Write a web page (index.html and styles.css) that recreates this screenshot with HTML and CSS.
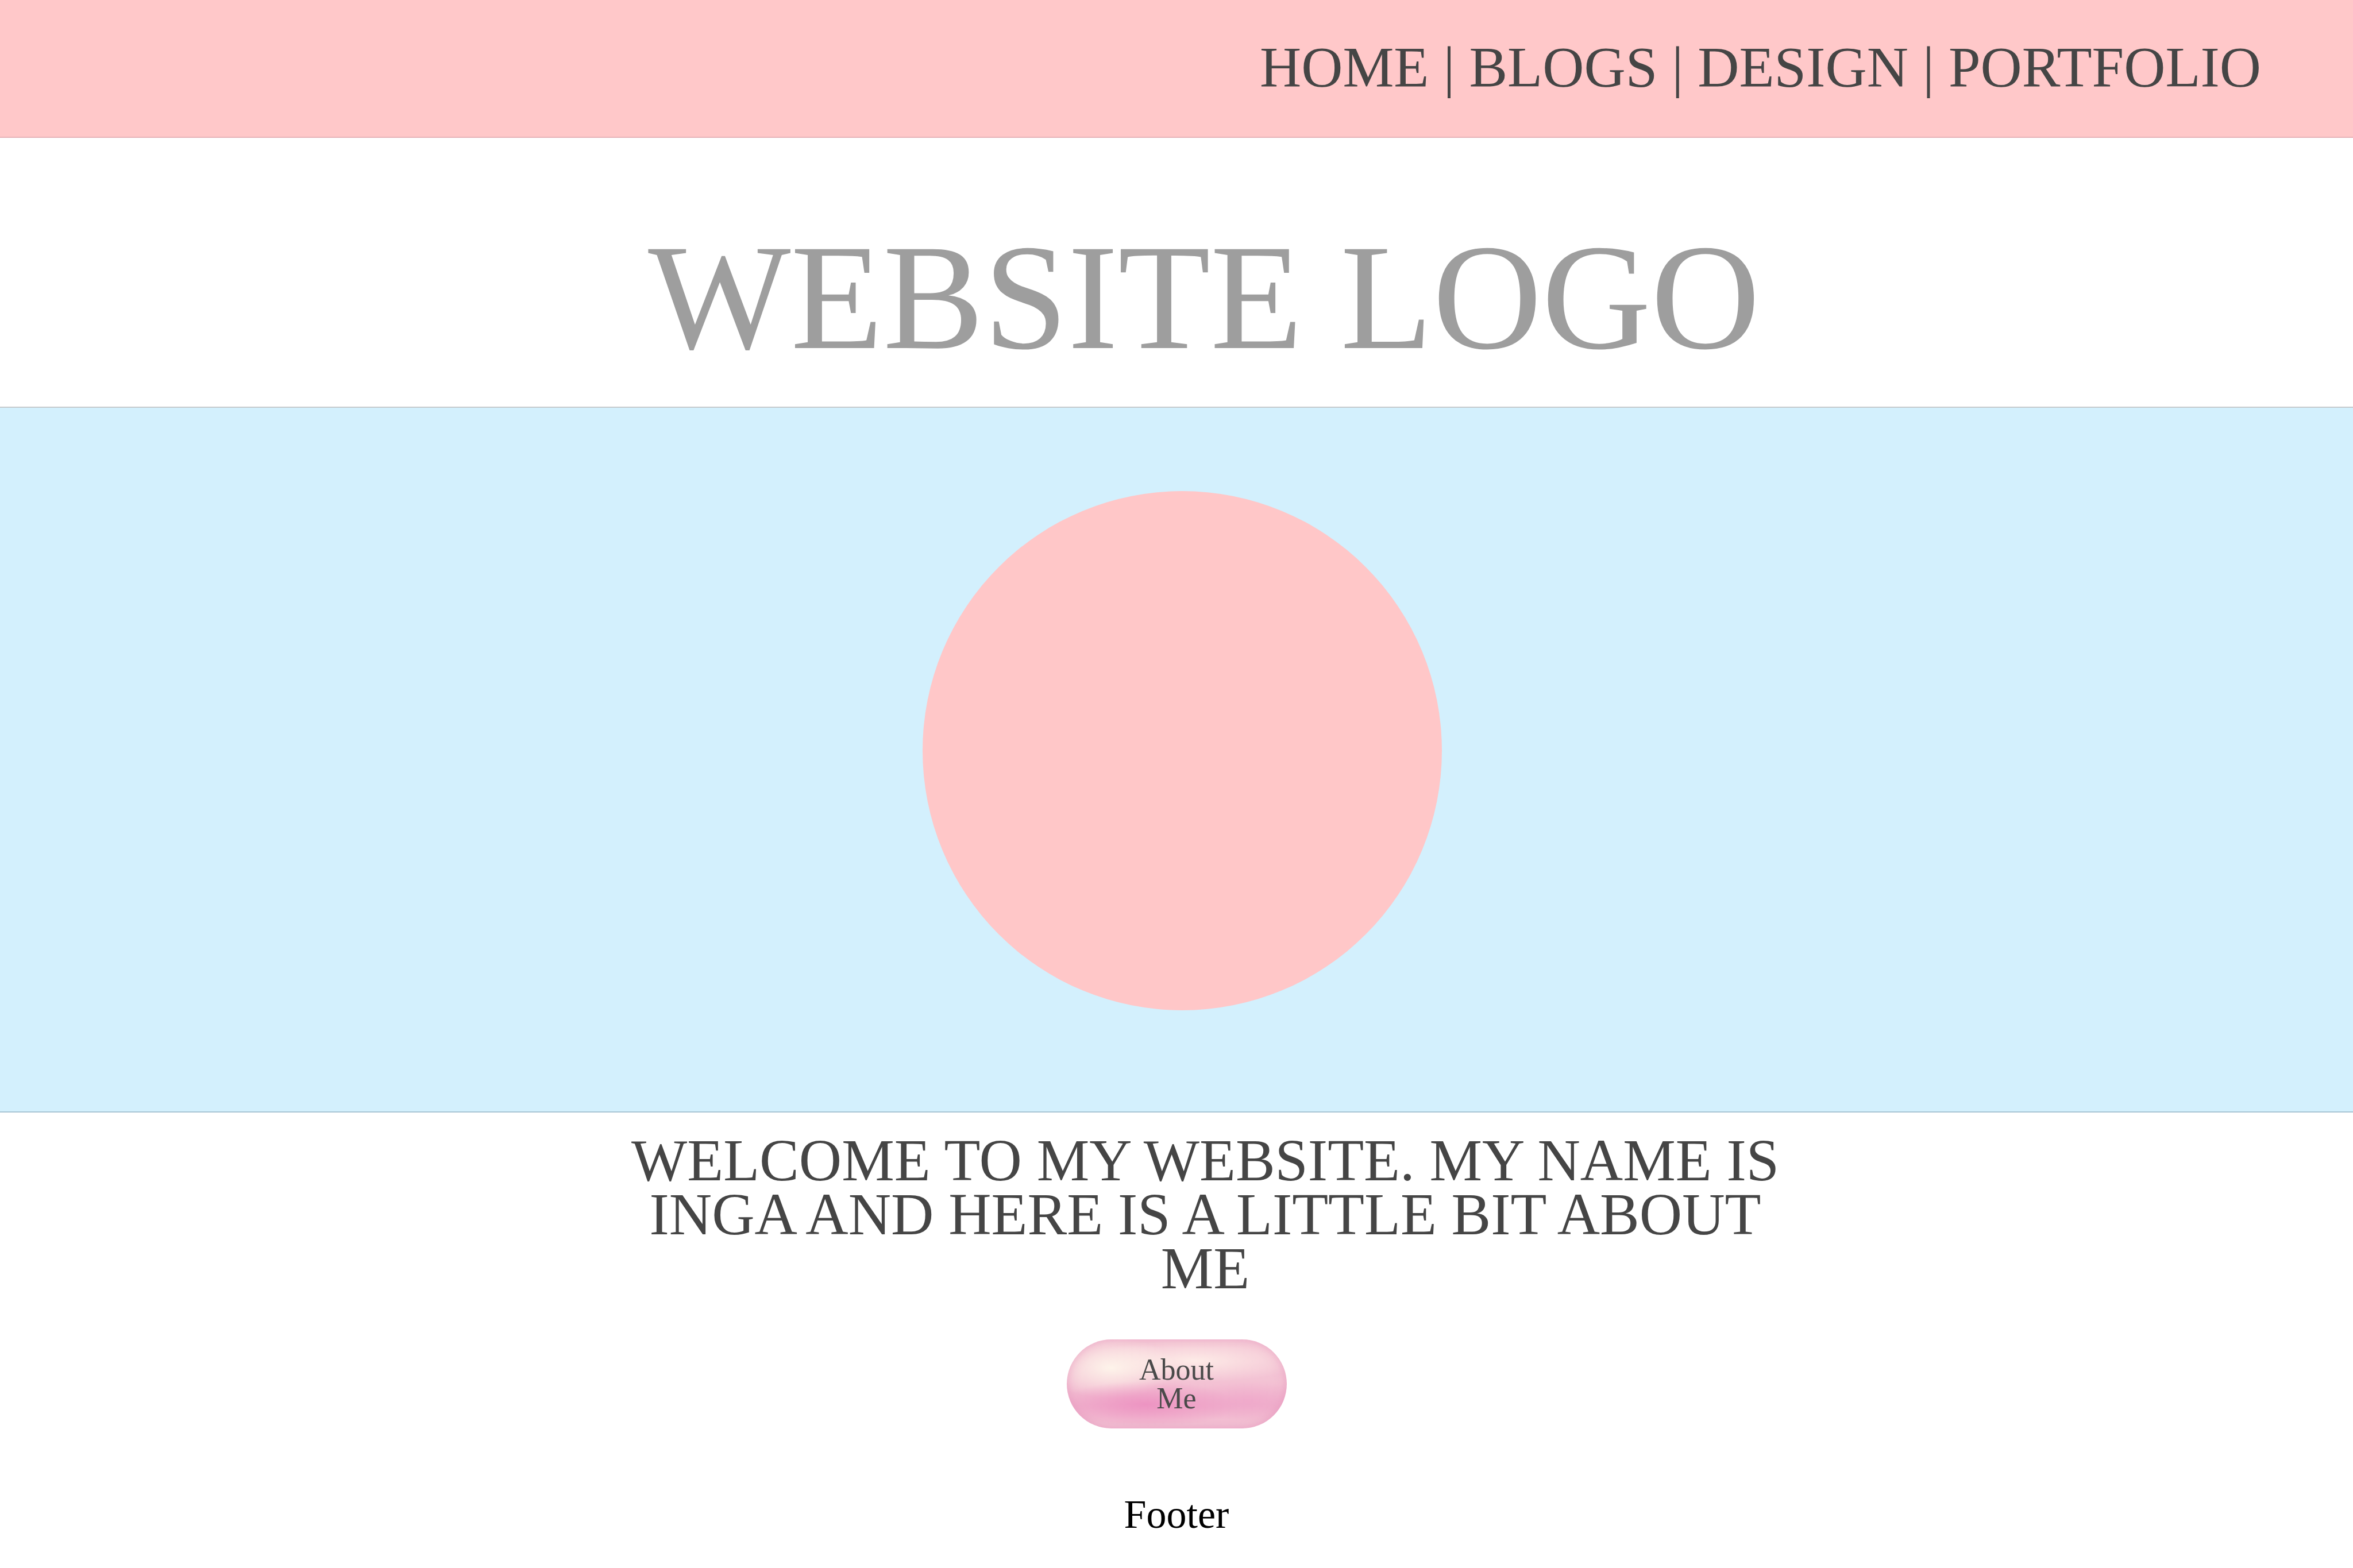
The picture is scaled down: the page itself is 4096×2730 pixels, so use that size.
FILE: index.html
```html
<!DOCTYPE html>
<html lang="en">
<head>
<meta charset="utf-8">
<title>Website</title>
<link rel="stylesheet" href="styles.css">
</head>
<body>
<header class="topbar">
  <nav class="nav">HOME | BLOGS | DESIGN | PORTFOLIO</nav>
</header>
<section class="logo-area">
  <h1 class="logo">WEBSITE LOGO</h1>
</section>
<section class="hero">
  <div class="circle"></div>
</section>
<main class="intro">
  <h2 class="intro-title">WELCOME TO MY WEBSITE. MY NAME IS INGA AND HERE IS A LITTLE BIT ABOUT ME</h2>
  <a class="pill" href="#">About Me</a>
</main>
<footer class="footer">Footer</footer>
</body>
</html>
```
FILE: styles.css
```css
* { box-sizing: border-box; }
html, body { margin: 0; padding: 0; background: #ffffff; }
body { font-family: "Liberation Serif", "Times New Roman", serif; }

.topbar {
  height: 240px;
  background: #ffc8c9;
  border-bottom: 2px solid #e6b2b7;
  display: flex;
  justify-content: flex-end;
  align-items: center;
  padding-right: 160px;
  padding-bottom: 4px;
}
.nav {
  font-size: 100px;
  line-height: 1;
  color: #454545;
  white-space: nowrap;
}

.logo-area {
  height: 470px;
  padding-top: 146px;
  padding-left: 96px;
  border-bottom: 2px solid #c5cacd;
  text-align: center;
}
.logo {
  margin: 0;
  font-weight: normal;
  font-size: 263px;
  line-height: 1;
  color: #9e9e9e;
  white-space: nowrap;
}

.hero {
  height: 1227px;
  background: #d3f0fd;
  border-bottom: 2px solid #a9c6d4;
  display: flex;
  justify-content: center;
  padding-top: 145px;
  padding-left: 20px;
}
.circle {
  width: 904px;
  height: 904px;
  border-radius: 50%;
  background: #ffc7c8;
}

.intro {
  display: flex;
  flex-direction: column;
  align-items: center;
  padding-top: 36px;
}
.intro-title {
  margin: 0 0 0 100px;
  width: 2040px;
  font-weight: normal;
  font-size: 103px;
  line-height: 94px;
  color: #454545;
  text-align: center;
}
.pill {
  margin-top: 77px;
  width: 383px;
  height: 155px;
  border-radius: 78px;
  padding: 0 110px;
  display: flex;
  align-items: center;
  justify-content: center;
  text-align: center;
  text-decoration: none;
  font-size: 52px;
  line-height: 50px;
  color: #4a4a4a;
  background:
    radial-gradient(ellipse 42% 26% at 36% 73%, rgba(236,142,192,0.85), rgba(236,142,192,0) 100%),
    radial-gradient(ellipse 30% 22% at 82% 70%, rgba(238,160,200,0.6), rgba(238,160,200,0) 100%),
    radial-gradient(ellipse 30% 34% at 20% 32%, rgba(255,248,236,0.9), rgba(255,248,236,0) 100%),
    radial-gradient(ellipse 50% 24% at 58% 24%, rgba(255,242,234,0.85), rgba(255,242,234,0) 100%),
    linear-gradient(180deg, #f4c6d5 0%, #f3c3d4 45%, #f0b4cd 75%, #f3c4d5 100%);
  box-shadow: inset 0 -4px 10px rgba(230,150,190,0.3), inset 8px 0 14px rgba(235,160,195,0.3), inset -8px 0 14px rgba(235,160,195,0.3);
}

.footer {
  margin-top: 111px;
  text-align: center;
  font-size: 70px;
  line-height: 78px;
  color: #000000;
}
```
